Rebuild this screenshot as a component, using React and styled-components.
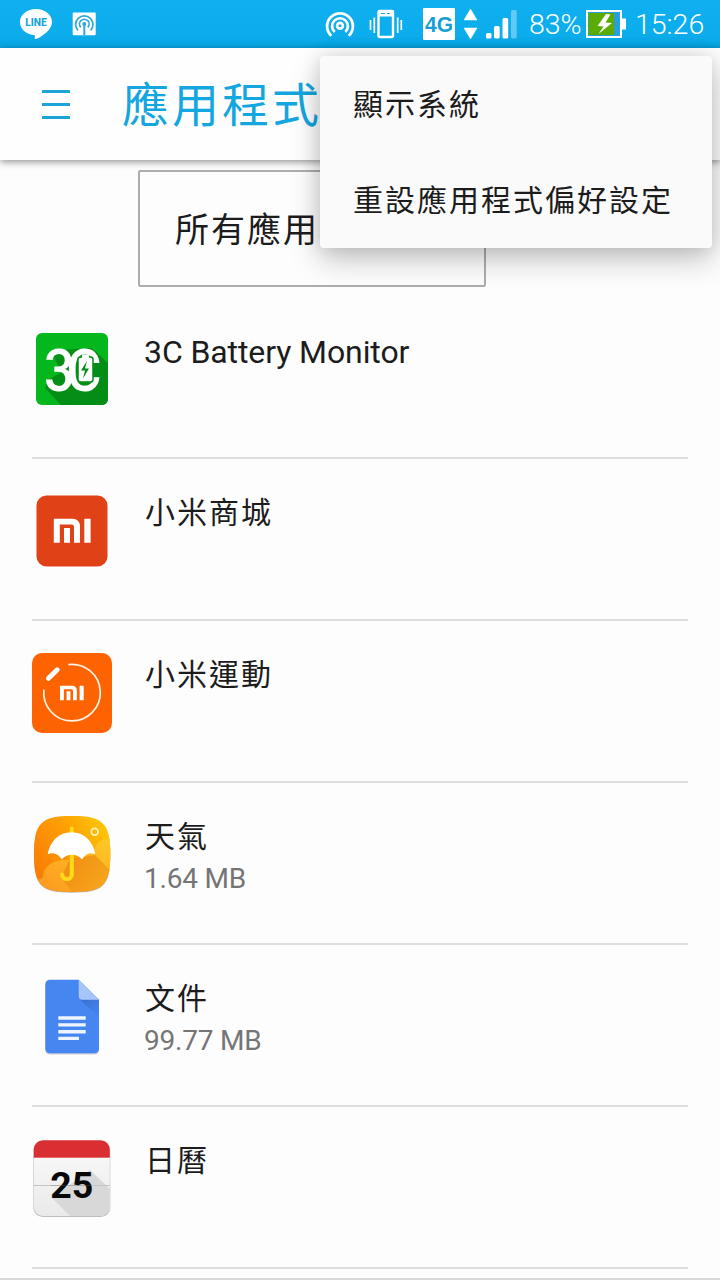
import styled, { createGlobalStyle } from 'styled-components';

const GlobalStyle = createGlobalStyle`
  * {
    box-sizing: border-box;
  }

  body {
    margin: 0;
    background: #fdfdfd;
    font-family: Roboto, "Noto Sans CJK TC", sans-serif;
    overflow: hidden;
  }

  svg {
    display: block;
    flex: none;
  }
`;

const Screen = styled.div`
  position: relative;
  width: 720px;
  height: 1280px;
  overflow: hidden;
  display: flex;
  flex-direction: column;
  background: #fdfdfd;
  border-bottom: 2px solid #d9d9d9;
`;

const StatusBar = styled.header`
  flex: none;
  display: flex;
  justify-content: space-between;
  height: 48px;
  padding: 0 16px 0 20px;
  background: linear-gradient(#10b0f0, #0cadec 70%, #08a5e2);
`;

const StatusGroup = styled.div`
  display: flex;
  align-items: center;
`;

const StatusIcon = styled.svg.attrs(({ $width }) => ({
  width: $width,
  height: 48,
  viewBox: `0 0 ${$width} 48`,
}))`
  margin-right: ${({ $gap }) => $gap || 0}px;
`;

const StatusText = styled.span`
  width: ${({ $width }) => $width}px;
  font-size: 28.5px;
  font-weight: 300;
  line-height: 48px;
  padding-top: 2px;
  color: #fff;
  white-space: nowrap;
`;

const Toolbar = styled.div`
  position: relative;
  flex: none;
  display: flex;
  align-items: center;
  height: 112px;
  padding-left: 42px;
  background: #fefefe;
  box-shadow: 0 2px 7px rgba(0, 0, 0, 0.42);
`;

const MenuButton = styled.button`
  display: flex;
  flex-direction: column;
  gap: 10px;
  width: 28px;
  padding: 0;
  border: 0;
  background: none;

  span {
    height: 3px;
    background: #1ba4d8;
  }
`;

const Title = styled.h1`
  margin: 0 0 0 52px;
  padding-top: 3px;
  font-size: 47px;
  font-weight: 400;
  line-height: 112px;
  letter-spacing: 3px;
  color: #14a6de;
`;

const Spinner = styled.div`
  flex: none;
  width: 348px;
  height: 117px;
  margin: 10px 0 10px 138px;
  padding-left: 35px;
  border: 2px solid #adadad;
  border-radius: 2px;
  overflow: hidden;
  white-space: nowrap;
  font-size: 34px;
  line-height: 117px;
  letter-spacing: 2px;
  color: #1c1c1c;
`;

const AppList = styled.ul`
  margin: 0;
  padding: 0 32px;
  list-style: none;
`;

const AppRow = styled.li`
  display: flex;
  gap: 32px;
  height: 162px;
  border-bottom: 2px solid #dedede;
`;

const AppIcon = styled.svg.attrs({ width: 80, height: 80, viewBox: '0 0 80 80' })`
  margin-top: 32px;
`;

const AppText = styled.div`
  display: flex;
  flex-direction: column;
  padding-top: 34px;
`;

const AppName = styled.span`
  padding-left: 1px;
  font-size: 30px;
  line-height: 40px;
  letter-spacing: 2px;
  color: #1c1c1c;

  &:lang(en) {
    padding: 1px 0 0;
    font-size: 32px;
    letter-spacing: -0.1px;
  }
`;

const AppSize = styled.span`
  margin-top: 2px;
  font-size: 28px;
  line-height: 40px;
  letter-spacing: -0.2px;
  color: #757575;
`;

const Popup = styled.div`
  position: absolute;
  top: 56px;
  left: 320px;
  width: 392px;
  border-radius: 4px;
  background: #fafafa;
  box-shadow: 0 12px 30px rgba(0, 0, 0, 0.22), 0 0 20px rgba(0, 0, 0, 0.12);
`;

const PopupItem = styled.div`
  height: 96px;
  padding-left: 33px;
  font-size: 30px;
  line-height: 98px;
  letter-spacing: 2px;
  white-space: nowrap;
  color: #1c1c1c;
`;

const MiMark = () => (
  <g fill="#fff">
    <path d="M21.8 27.7H41a7 7 0 0 1 7 7v17h-6V36a2.5 2.5 0 0 0-2.500-2.500H27.800v18.200h-6z" />
    <path d="M32 37h6v14.700h-6zM52.300 27.700h6.300v24h-6.300z" />
  </g>
);

const BatteryMonitorIcon = () => (
  <AppIcon>
    <defs>
      <linearGradient id="bmShade" x1="0" y1="0" x2="1" y2="1">
        <stop offset="0" stopColor="#049018" />
        <stop offset="1" stopColor="#048c16" />
      </linearGradient>
    </defs>
    <rect x="4" y="4" width="72" height="72" rx="6" fill="#04b71d" />
    <path d="M17 51 29 43 20 23 38 20 60 19 76 34V70a6 6 0 0 1-6 6H29L13 59z" fill="url(#bmShade)" />
    <text transform="translate(12 61.500) scale(.9 1)" fontFamily="Roboto" fontSize="60" fontWeight="500" letterSpacing="-9.500" fill="#fff">3C</text>
    <rect x="46" y="28" width="15" height="25" rx="2.500" fill="#fff" stroke="#048c16" strokeWidth="1.500" />
    <rect x="50" y="25.500" width="7" height="4" rx="1" fill="#fff" />
    <path d="m55 32-6 9.500h4l-2 8 6-10h-4z" fill="#048c16" />
  </AppIcon>
);

const MiStoreIcon = () => (
  <AppIcon>
    <rect x="4.500" y="4.500" width="71" height="71" rx="10" fill="#e04117" />
    <MiMark />
  </AppIcon>
);

const MiFitIcon = () => (
  <AppIcon>
    <rect width="80" height="80" rx="10" fill="#fd6300" />
    <path d="M36.300 11.600A28.300 28.300 0 1 1 11.900 36.500" fill="none" stroke="#fff3e4" strokeWidth="1.700" />
    <path d="m16.500 25.300 8.700-8.500" stroke="#fff" strokeWidth="5" strokeLinecap="round" />
    <g transform="translate(14 15.800) scale(.643 .61)">
      <MiMark />
    </g>
  </AppIcon>
);

const WeatherIcon = () => (
  <AppIcon>
    <defs>
      <linearGradient id="wxSky" x1="0" y1=".6" x2="1" y2="0">
        <stop offset="0" stopColor="#fb7d04" />
        <stop offset=".5" stopColor="#fda004" />
        <stop offset="1" stopColor="#fdd205" />
      </linearGradient>
      <linearGradient id="wxCloud" x1="0" y1="1" x2="1" y2="0">
        <stop offset="0" stopColor="#fd9420" />
        <stop offset="1" stopColor="#fdca25" />
      </linearGradient>
      <linearGradient id="wxShade" x1="0" y1="0" x2="1" y2="1">
        <stop offset="0" stopColor="#ea7c0a" />
        <stop offset="1" stopColor="#f7a81d" />
      </linearGradient>
      <clipPath id="wxClip">
        <path d="M2 39C2 8 9 1 40 1s38.300 7 38.300 38S71 76.700 40 76.700 2 70 2 39z" />
      </clipPath>
    </defs>
    <path d="M2 40C2 9 9 2 40 2s38.300 7 38.300 38S71 77.700 40 77.700 2 71 2 40z" fill="#c1b19b" />
    <g clipPath="url(#wxClip)">
      <rect width="80" height="80" fill="url(#wxSky)" />
      <path d="M80 25C70 22 63 29 61 37L45 45H30C19 46 10 54 11 63c-5 1-8 4-9 7v10h78z" fill="url(#wxCloud)" />
      <path d="m63 40 17 17v23H42L29 62l9-18z" fill="url(#wxShade)" opacity=".72" />
    </g>
    <path d="M39.800 13.500v4M39.800 39v20.500a4.800 4.800 0 0 1-9.600 0" fill="none" stroke="#fddb18" strokeWidth="4" strokeLinecap="round" />
    <path d="M15.700 39.300C18 26 27 17.300 39.500 17.300S61 26 63.300 39.300C58 36.500 53 39 50 44.500c-4-6.500-16-6.500-20.300 0C27 39 21 36.500 15.700 39.300z" fill="#fff" />
    <circle cx="62.700" cy="16.700" r="3.400" fill="none" stroke="#fff3bc" strokeWidth="1.800" />
  </AppIcon>
);

const DocsIcon = () => (
  <AppIcon>
    <defs>
      <linearGradient id="docShade" x1="0" y1="0" x2="1" y2="1">
        <stop offset="0" stopColor="#3a70d0" />
        <stop offset="1" stopColor="#4686f0" />
      </linearGradient>
    </defs>
    <path d="M13.300 8v65a4.500 4.500 0 0 0 4.500 4.500h44.700A4.500 4.500 0 0 0 67 73V22z" fill="#c9cdd6" />
    <path d="M17.800 2.700h28.900L67 22.700v49.100a4.500 4.500 0 0 1-4.500 4.500H17.800a4.500 4.500 0 0 1-4.500-4.500V7.200a4.500 4.500 0 0 1 4.500-4.500z" fill="#4686f0" />
    <path d="M48 22.700h19v17z" fill="url(#docShade)" />
    <path d="M46.700 2.700 67 22.700H50.500a3.800 3.800 0 0 1-3.800-3.800z" fill="#a6c5fa" />
    <path d="M26.300 39.300h27.400v3.400H26.300zM26.300 46.200h27.400v3.400H26.300zM26.300 53h27.400v3.400H26.300zM26.300 59.700H47v3.300H26.300z" fill="#eff5ff" />
  </AppIcon>
);

const CalendarIcon = () => (
  <AppIcon>
    <defs>
      <linearGradient id="calPaper" x1="0" y1="0" x2="0" y2="1">
        <stop offset="0" stopColor="#fbfbfb" />
        <stop offset="1" stopColor="#e9e9e9" />
      </linearGradient>
      <clipPath id="calClip">
        <rect x="1.800" y="1.300" width="76" height="75.700" rx="9" />
      </clipPath>
    </defs>
    <rect x="1.300" y="2" width="77" height="76" rx="9.500" fill="#bebebe" />
    <g clipPath="url(#calClip)">
      <rect width="80" height="80" fill="url(#calPaper)" />
      <path d="M58 31 78 50V78H39L20 59z" fill="#d8d8d8" />
      <rect width="80" height="18.700" fill="#d92f32" />
      <path d="M0 46.500h80" stroke="#c4c4c4" strokeWidth="1" />
    </g>
    <text x="39.800" y="58.700" textAnchor="middle" fontFamily="Roboto" fontSize="37.500" fontWeight="700" fill="#080808">25</text>
    <path d="M19 46.500h41" stroke="#777" strokeWidth=".3" />
  </AppIcon>
);

const apps = [
  { name: '3C Battery Monitor', lang: 'en', Icon: BatteryMonitorIcon },
  { name: '小米商城', Icon: MiStoreIcon },
  { name: '小米運動', Icon: MiFitIcon },
  { name: '天氣', size: '1.64 MB', Icon: WeatherIcon },
  { name: '文件', size: '99.77 MB', Icon: DocsIcon },
  { name: '日曆', Icon: CalendarIcon },
];

const menuItems = ['顯示系統', '重設應用程式偏好設定'];

const Status = () => (
  <StatusBar>
    <StatusGroup>
      <StatusIcon $width={32} $gap={20}>
        <path d="M16 9c9 0 16 5.600 16 13 0 6-5.500 11-11 14.500-2 1.300-5 3-6 2.500-.8-.4.600-3-.5-3.700C6 34.500 0 29 0 22 0 14.600 7 9 16 9z" fill="#fff" />
        <text x="16" y="26.200" textAnchor="middle" textLength="21.500" lengthAdjust="spacingAndGlyphs" fontFamily="Roboto" fontSize="10.200" fontWeight="800" fill="#18a4df">LINE</text>
      </StatusIcon>
      <StatusIcon $width={24}>
        <rect x=".700" y="12.500" width="23" height="22.700" rx="1" fill="#fff" />
        <g fill="none" stroke="#2eaada" strokeWidth="1.700">
          <path d="M6 30.500a8.700 8.700 0 1 1 12.600 0M8.800 27.400a4.800 4.800 0 1 1 7 0" />
          <path d="M12.300 24v11" strokeWidth="2" />
        </g>
        <circle cx="12.300" cy="24" r="2" fill="#2eaada" />
      </StatusIcon>
    </StatusGroup>
    <StatusGroup>
      <StatusIcon $width={30} $gap={14}>
        <g fill="none" stroke="#fff" strokeWidth="2.700">
          <path d="M6.300 35.800a12.900 12.900 0 1 1 17.400 0M9.700 32a7.900 7.900 0 1 1 10.600 0" />
          <circle cx="15" cy="25.700" r="2.900" />
        </g>
      </StatusIcon>
      <StatusIcon $width={34} $gap={20}>
        <g fill="none" stroke="#fff" strokeWidth="2">
          <path d="M1.500 20v10M5.300 17.500v15.500M28.700 17.500v15.500M32.300 20v10" strokeWidth="1.700" />
          <rect x="9.500" y="11" width="14.500" height="26" rx="1.500" strokeWidth="2.400" />
        </g>
        <path d="M9 10h15.500v6.500H9z" fill="#fff" />
        <path d="M12 13.500h4M18 13.500h3" stroke="#11a9e7" />
      </StatusIcon>
      <StatusIcon $width={32} $gap={9}>
        <rect y="8" width="32" height="32" rx="1" fill="#fff" />
        <text x="16" y="32" textAnchor="middle" textLength="28" lengthAdjust="spacingAndGlyphs" fontFamily="Liberation Sans" fontSize="22.500" fontWeight="700" fill="#159fd5">4G</text>
      </StatusIcon>
      <StatusIcon $width={13} $gap={9}>
        <path d="M6.500 9 13 20H0zM0 28h13L6.500 39z" fill="#fff" stroke="#fff" strokeWidth=".500" strokeLinejoin="round" />
      </StatusIcon>
      <StatusIcon $width={31} $gap={12}>
        <g fill="#fff">
          <rect y="33" width="5.500" height="5.500" rx="1.500" />
          <rect x="8" y="26" width="5.700" height="12.500" rx="1.500" />
          <rect x="16.500" y="18" width="5.700" height="20.500" rx="1.500" />
          <rect x="25" y="10" width="5.700" height="28.500" rx="1.500" opacity=".35" />
        </g>
      </StatusIcon>
      <StatusText $width={57}>83%</StatusText>
      <StatusIcon $width={40} $gap={9}>
        <rect x="1" y="11" width="34" height="26" fill="#26a0dc" stroke="#fff" strokeWidth="2" />
        <path d="M36 18.500h4v11h-4z" fill="#fff" />
        <rect x="2.500" y="13" width="25.500" height="22" fill="#5aab03" />
        <path d="m20 14-8.500 12 6 .5-5 7.500L26 23l-6.500-.5 5-8z" fill="#fff" />
      </StatusIcon>
      <StatusText $width={69}>15:26</StatusText>
    </StatusGroup>
  </StatusBar>
);

const App = () => {
  return (
    <Screen lang="zh-TW">
      <GlobalStyle />
      <Status />
      <Toolbar>
        <MenuButton aria-label="menu">
          <span />
          <span />
          <span />
        </MenuButton>
        <Title>應用程式</Title>
      </Toolbar>
      <Spinner>所有應用程式</Spinner>
      <AppList>
        {apps.map(({ name, lang, size, Icon }) => (
          <AppRow key={name}>
            <Icon />
            <AppText>
              <AppName lang={lang}>{name}</AppName>
              {size && <AppSize>{size}</AppSize>}
            </AppText>
          </AppRow>
        ))}
      </AppList>
      <Popup>
        {menuItems.map((item) => (
          <PopupItem key={item}>{item}</PopupItem>
        ))}
      </Popup>
    </Screen>
  );
};

export default App;
